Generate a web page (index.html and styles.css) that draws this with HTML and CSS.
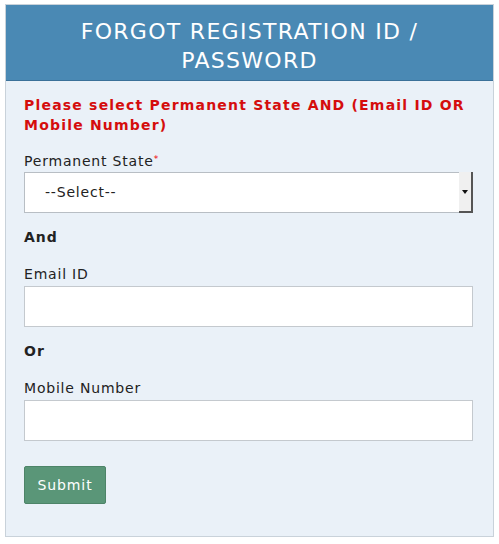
FILE: index.html
```html
<!DOCTYPE html>
<html>
<head>
<meta charset="utf-8">
<link rel="stylesheet" href="styles.css">
</head>
<body>
<div class="panel">
  <div class="panel-head">FORGOT REGISTRATION ID /<br>PASSWORD</div>
  <div class="panel-body">
    <p class="warn">Please select Permanent State AND (Email ID OR Mobile Number)</p>
    <label class="lbl lbl-first">Permanent State<sup class="req">*</sup></label>
    <div class="select">
      <span class="select-text">--Select--</span>
      <span class="select-btn"><span class="caret"></span></span>
    </div>
    <p class="sep">And</p>
    <label class="lbl">Email ID</label>
    <div class="input"></div>
    <p class="sep">Or</p>
    <label class="lbl">Mobile Number</label>
    <div class="input"></div>
    <button class="submit">Submit</button>
  </div>
</div>
</body>
</html>
```
FILE: styles.css
```css
html, body { margin: 0; padding: 0; background: #fff; }
body { font-family: "DejaVu Sans", sans-serif; padding: 4px 5px 7px 5px; }
.panel {
  border: 1px solid #c9d2da;
  background: #eaf1f8;
  height: 533px;
  box-sizing: border-box;
}
.panel-head {
  background: #4a89b4;
  color: #fff;
  text-align: center;
  font-size: 22px;
  letter-spacing: 1.3px;
  line-height: 29px;
  height: 76px;
  box-sizing: border-box;
  padding-top: 12px;
  border-bottom: 1px solid #3b7199;
}
.panel-body { padding: 14px 20px 0 18px; }
.warn {
  margin: 0;
  color: #d50d0d;
  font-weight: bold;
  font-size: 14px;
  letter-spacing: 1.2px;
  line-height: 20px;
}
.lbl {
  display: block;
  margin-top: 17px;
  font-size: 14px;
  letter-spacing: 0.8px;
  line-height: 20px;
  color: #222;
}
.lbl-first { margin-top: 16px; }
.req { color: #e00; font-size: 9px; vertical-align: top; position: relative; top: -2px; letter-spacing: 0; }
.select {
  margin-top: 1px;
  height: 41px;
  box-sizing: border-box;
  background: #fff;
  border: 1px solid #b8bec4;
  display: flex;
  align-items: stretch;
}
.select-text { flex: 1; padding-left: 20px; font-size: 14px; letter-spacing: 0.8px; line-height: 39px; color: #222; }
.select-btn {
  width: 12px;
  background: #f0f0f0;
  border-right: 2px solid #555;
  border-bottom: 2px solid #555;
  display: flex; align-items: center; justify-content: center;
  margin: -1px -1px -1px 0;
}
.caret { width: 0; height: 0; border-left: 3px solid transparent; border-right: 3px solid transparent; border-top: 4px solid #111; }
.sep { margin: 14px 0 0; font-weight: bold; font-size: 14px; letter-spacing: 1px; line-height: 20px; color: #222; }
.input {
  margin-top: 2px;
  height: 41px;
  box-sizing: border-box;
  background: #fff;
  border: 1px solid #c4c9ce;
}
.submit {
  margin-top: 25px;
  width: 82px;
  height: 38px;
  background: #5a9678;
  color: #fff;
  border: 1px solid #4d8468;
  border-radius: 2px;
  font-family: "DejaVu Sans", sans-serif;
  font-size: 14px;
  letter-spacing: 0.9px;
  padding: 0;
}
```
